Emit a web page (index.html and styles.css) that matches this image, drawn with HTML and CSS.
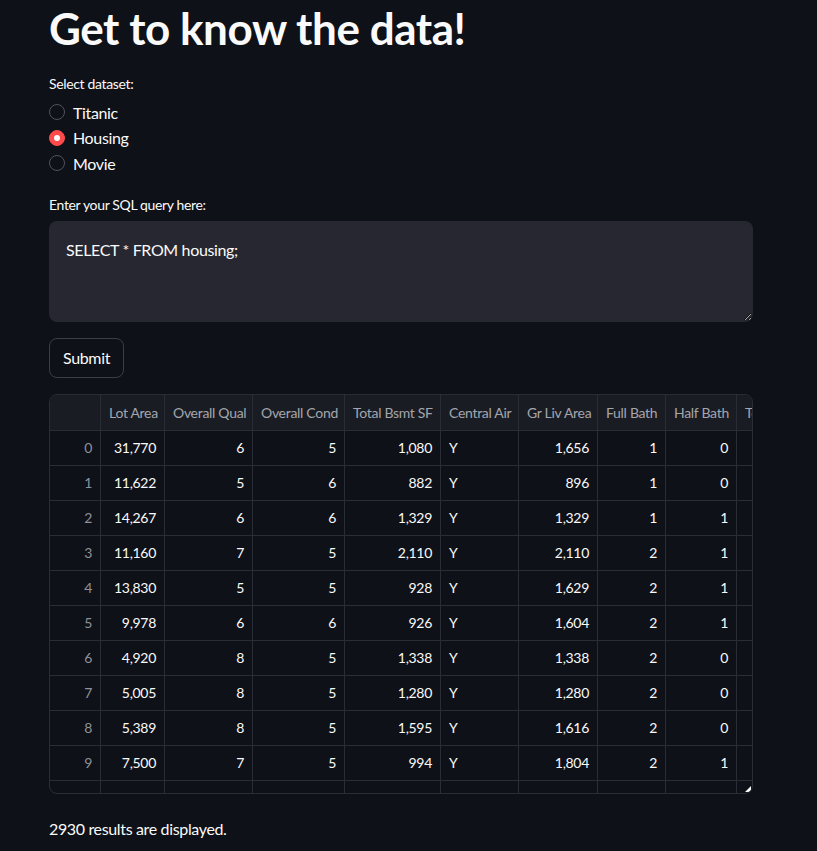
FILE: index.html
```html
<!DOCTYPE html>
<html lang="en">
<head>
<meta charset="utf-8">
<title>Get to know the data!</title>
<link rel="stylesheet" href="styles.css">
</head>
<body>
<main class="main">
  <h1 class="title">Get to know the data!</h1>

  <div class="field-label">Select dataset:</div>
  <div class="radio-group">
    <label class="radio"><span class="radio-dot"></span><span>Titanic</span></label>
    <label class="radio checked"><span class="radio-dot"></span><span>Housing</span></label>
    <label class="radio"><span class="radio-dot"></span><span>Movie</span></label>
  </div>

  <div class="field-label sql-label">Enter your SQL query here:</div>
  <textarea class="query">SELECT * FROM housing;</textarea>

  <button class="submit" type="button">Submit</button>

  <div class="grid">
    <div class="row head">
      <div class="c idx"></div>
      <div class="c">Lot Area</div>
      <div class="c">Overall Qual</div>
      <div class="c">Overall Cond</div>
      <div class="c">Total Bsmt SF</div>
      <div class="c">Central Air</div>
      <div class="c">Gr Liv Area</div>
      <div class="c">Full Bath</div>
      <div class="c">Half Bath</div>
      <div class="c">Total Rooms</div>
    </div>
    <div class="row"><div class="c idx">0</div><div class="c n">31,770</div><div class="c n">6</div><div class="c n">5</div><div class="c n">1,080</div><div class="c">Y</div><div class="c n">1,656</div><div class="c n">1</div><div class="c n">0</div><div class="c n"></div></div>
    <div class="row"><div class="c idx">1</div><div class="c n">11,622</div><div class="c n">5</div><div class="c n">6</div><div class="c n">882</div><div class="c">Y</div><div class="c n">896</div><div class="c n">1</div><div class="c n">0</div><div class="c n"></div></div>
    <div class="row"><div class="c idx">2</div><div class="c n">14,267</div><div class="c n">6</div><div class="c n">6</div><div class="c n">1,329</div><div class="c">Y</div><div class="c n">1,329</div><div class="c n">1</div><div class="c n">1</div><div class="c n"></div></div>
    <div class="row"><div class="c idx">3</div><div class="c n">11,160</div><div class="c n">7</div><div class="c n">5</div><div class="c n">2,110</div><div class="c">Y</div><div class="c n">2,110</div><div class="c n">2</div><div class="c n">1</div><div class="c n"></div></div>
    <div class="row"><div class="c idx">4</div><div class="c n">13,830</div><div class="c n">5</div><div class="c n">5</div><div class="c n">928</div><div class="c">Y</div><div class="c n">1,629</div><div class="c n">2</div><div class="c n">1</div><div class="c n"></div></div>
    <div class="row"><div class="c idx">5</div><div class="c n">9,978</div><div class="c n">6</div><div class="c n">6</div><div class="c n">926</div><div class="c">Y</div><div class="c n">1,604</div><div class="c n">2</div><div class="c n">1</div><div class="c n"></div></div>
    <div class="row"><div class="c idx">6</div><div class="c n">4,920</div><div class="c n">8</div><div class="c n">5</div><div class="c n">1,338</div><div class="c">Y</div><div class="c n">1,338</div><div class="c n">2</div><div class="c n">0</div><div class="c n"></div></div>
    <div class="row"><div class="c idx">7</div><div class="c n">5,005</div><div class="c n">8</div><div class="c n">5</div><div class="c n">1,280</div><div class="c">Y</div><div class="c n">1,280</div><div class="c n">2</div><div class="c n">0</div><div class="c n"></div></div>
    <div class="row"><div class="c idx">8</div><div class="c n">5,389</div><div class="c n">8</div><div class="c n">5</div><div class="c n">1,595</div><div class="c">Y</div><div class="c n">1,616</div><div class="c n">2</div><div class="c n">0</div><div class="c n"></div></div>
    <div class="row"><div class="c idx">9</div><div class="c n">7,500</div><div class="c n">7</div><div class="c n">5</div><div class="c n">994</div><div class="c">Y</div><div class="c n">1,804</div><div class="c n">2</div><div class="c n">1</div><div class="c n"></div></div>
    <div class="row"><div class="c idx"></div><div class="c n"></div><div class="c n"></div><div class="c n"></div><div class="c n"></div><div class="c"></div><div class="c n"></div><div class="c n"></div><div class="c n"></div><div class="c n"></div></div>
    <span class="grip"></span>
  </div>

  <p class="result">2930 results are displayed.</p>
</main>
</body>
</html>
```

FILE: styles.css
```css
* { box-sizing: border-box; }

html, body {
  margin: 0;
  background: #0e1117;
}

body {
  color: #fafafa;
  font-family: Lato, "Noto Sans", sans-serif;
  letter-spacing: -0.35px;
}

.main {
  width: 704px;
  margin-left: 49px;
  display: flex;
  flex-direction: column;
  align-items: flex-start;
}

.title {
  margin: 2px 0 0;
  font-size: 44px;
  font-weight: 700;
  line-height: 1.2;
  letter-spacing: -0.45px;
}

.field-label {
  margin-top: 19px;
  font-size: 14px;
  line-height: 20px;
}

.radio-group {
  margin-top: 5.5px;
  display: flex;
  flex-direction: column;
}

.radio {
  height: 25.5px;
  display: flex;
  align-items: center;
  gap: 8px;
  font-size: 16px;
}

.radio-dot {
  width: 16px;
  height: 16px;
  border-radius: 50%;
  border: 1px solid #50535b;
  display: flex;
  align-items: center;
  justify-content: center;
}

.radio.checked .radio-dot {
  background: #ff4b4b;
  border-color: #ff4b4b;
}

.radio.checked .radio-dot::after {
  content: "";
  width: 6px;
  height: 6px;
  border-radius: 50%;
  background: #ffffff;
}

.sql-label {
  margin-top: 19px;
}

.query {
  margin-top: 6px;
  width: 704px;
  height: 101px;
  padding: 15px 16px 16px;
  border: 1px solid transparent;
  border-radius: 8px;
  background: #262730;
  color: #fafafa;
  font-family: inherit;
  font-size: 16px;
  line-height: 1.6;
  letter-spacing: -0.35px;
  resize: vertical;
  outline: none;
}

.submit {
  margin-top: 16px;
  height: 40px;
  padding: 0 13px;
  border: 1px solid #3b3e46;
  border-radius: 8px;
  background: #0e1117;
  color: #fafafa;
  font-family: inherit;
  font-size: 16px;
  letter-spacing: -0.35px;
}

.grid {
  position: relative;
  margin-top: 16px;
  width: 704px;
  height: 400px;
  border: 1px solid #2a2d35;
  border-radius: 8px;
  overflow: hidden;
  font-size: 14px;
  letter-spacing: -0.3px;
}

.row {
  display: grid;
  grid-template-columns: 51px 64px 88px 92px 96px 78px 79px 68px 71px 100px;
  height: 35px;
}

.row.head {
  height: 36px;
  background: #1a1c24;
  color: #a3a6ad;
}

.c {
  border-right: 1px solid #2a2d35;
  border-bottom: 1px solid #2a2d35;
  padding: 0 8px;
  display: flex;
  align-items: center;
  white-space: nowrap;
  overflow: hidden;
}

.c.n {
  justify-content: flex-end;
}

.c.idx {
  justify-content: flex-end;
  color: #8e9199;
}

.grip {
  position: absolute;
  right: 1px;
  bottom: 1px;
  width: 0;
  height: 0;
  border-left: 6px solid transparent;
  border-bottom: 6px solid #fafafa;
}

.result {
  margin: 22px 0 0;
  font-size: 16px;
  line-height: 1.6;
}
```
